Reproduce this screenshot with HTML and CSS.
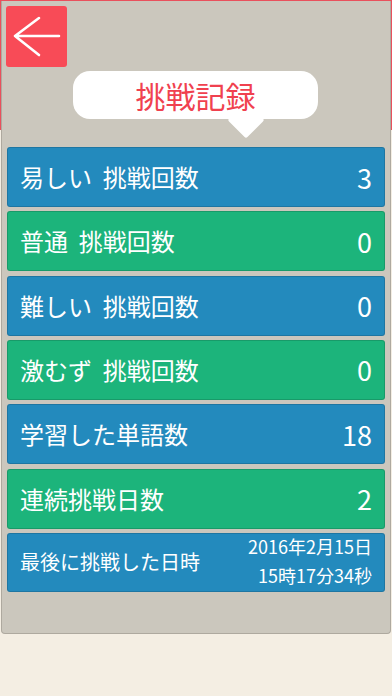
FILE: index.html
```html
<!DOCTYPE html>
<html lang="ja">
<head>
<meta charset="utf-8">
<title>挑戦記録</title>
<link rel="stylesheet" href="styles.css">
</head>
<body>
<div class="frame">
  <div class="panel">
    <div class="back">
      <svg width="61" height="61" viewBox="0 0 61 61"><path d="M9 30 H53 M33 12 L9 30 L33 49" fill="none" stroke="#fff" stroke-width="2.6" stroke-linecap="round" stroke-linejoin="round"/></svg>
    </div>
    <div class="bubble"><i class="tail"></i><span>挑戦記録</span></div>
    <div class="rows">
      <div class="row blue"><span class="label">易しい  挑戦回数</span><span class="num">3</span></div>
      <div class="row green"><span class="label">普通  挑戦回数</span><span class="num">0</span></div>
      <div class="row blue"><span class="label">難しい  挑戦回数</span><span class="num">0</span></div>
      <div class="row green"><span class="label">激むず  挑戦回数</span><span class="num">0</span></div>
      <div class="row blue"><span class="label">学習した単語数</span><span class="num">18</span></div>
      <div class="row green"><span class="label">連続挑戦日数</span><span class="num">2</span></div>
      <div class="row blue last"><span class="label small">最後に挑戦した日時</span><span class="date"><span>2016年2月15日</span><span>15時17分34秒</span></span></div>
    </div>
  </div>
</div>
</body>
</html>
```
FILE: styles.css
```css
* { box-sizing: border-box; }
html, body { margin: 0; padding: 0; }
body {
  width: 392px;
  height: 696px;
  background: #f4eee3;
  font-family: "Noto Sans CJK JP", "Noto Sans", sans-serif;
  overflow: hidden;
}
.frame {
  padding: 1px 1px 0 1px;
  background: linear-gradient(#e9505c 0, #e9505c 130px, transparent 130px);
}
.panel {
  background: #cbc7bd;
  border: 1px solid #aea99f;
  border-top: none;
  border-radius: 0 0 4px 4px;
  padding: 5px 4px 40px 4px;
  height: 633px;
}
.back {
  width: 61px;
  height: 61px;
  background: #f84b57;
  border-radius: 3px;
}
.back svg { display: block; }
.bubble {
  position: relative;
  margin: 4px 0 0 67px;
  width: 245px;
  height: 48px;
  background: #fff;
  border-radius: 17px;
  display: flex;
  align-items: center;
  justify-content: center;
  color: #f0414f;
  font-size: 30px;
  line-height: 1;
}
.bubble span { position: relative; z-index: 1; }
.tail {
  position: absolute;
  left: 160px;
  top: 36px;
  width: 26px;
  height: 26px;
  background: #fff;
  transform: rotate(45deg);
  border-radius: 2px;
}
.rows {
  margin-top: 28px;
  padding: 0 1px;
  display: flex;
  flex-direction: column;
  gap: 4.33px;
}
.row {
  height: 60px;
  border-radius: 3px;
  border: 1px solid rgba(0,0,0,0.14);
  display: flex;
  align-items: center;
  justify-content: space-between;
  padding: 0 12px 0 12px;
  color: #fff;
}
.row.last { height: 59px; }
.blue { background: #238abd; }
.green { background: #1cb47b; }
.label {
  white-space: pre;
  font-size: 24px;
  line-height: 1;
}
.label.small { font-size: 20px; }
.num {
  font-size: 27px;
  line-height: 1;
}
.date {
  display: flex;
  flex-direction: column;
  align-items: flex-end;
  font-size: 18px;
  line-height: 29px;
  margin-top: -2px;
}
```
